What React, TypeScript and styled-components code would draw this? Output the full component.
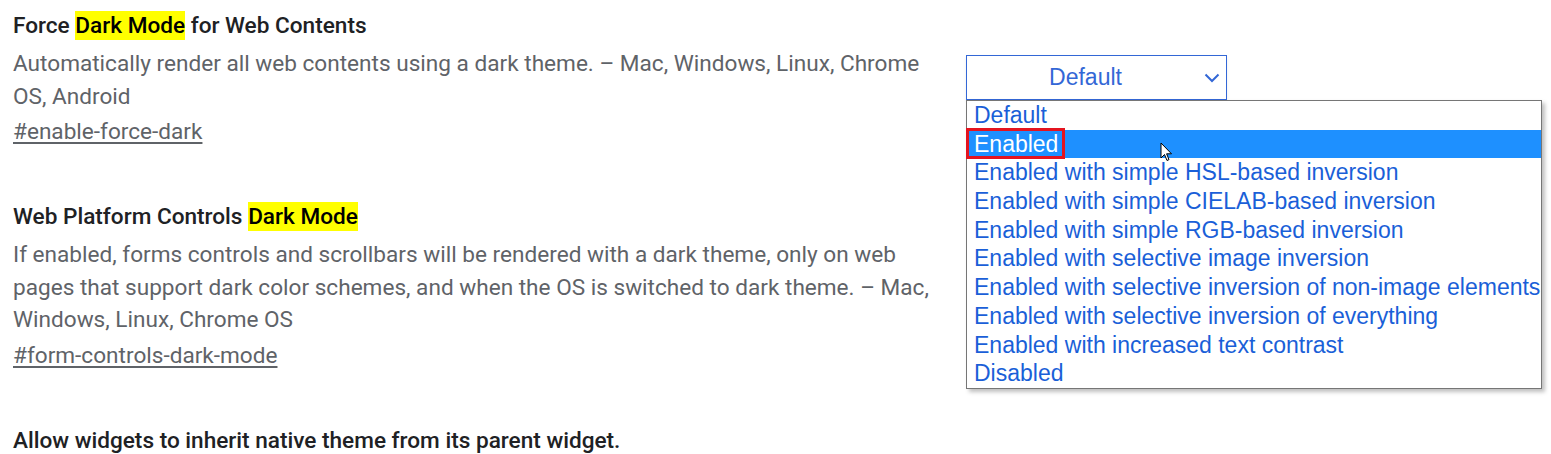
import React from "react";
import styled, { createGlobalStyle } from "styled-components";

const Global = createGlobalStyle`
  html, body { margin: 0; padding: 0; background: #ffffff; }
  body { font-family: Roboto, "Noto Sans", sans-serif; overflow: hidden; }
`;

const Page = styled.div`
  position: relative;
  width: 1551px;
  height: 454px;
  padding: 11px 0 0 13px;
  box-sizing: border-box;
  display: flex;
  flex-direction: column;
  gap: 54px;
`;

const Experiment = styled.section`
  display: flex;
  align-items: flex-start;
`;

const Info = styled.div`
  width: 935px;
  flex: none;
`;

const Title = styled.h3`
  margin: 0;
  font-family: Roboto, sans-serif;
  font-weight: 500;
  font-size: 22.6px;
  line-height: 30px;
  color: #202124;
`;

const Mark = styled.mark`
  background: #ffff00;
  color: #000;
  padding: 1px 0;
`;

const Desc = styled.p`
  margin: 7px 0 0;
  font-size: 22.6px;
  line-height: 32.6px;
  color: #5f6368;
`;

const Link = styled.a`
  display: block;
  margin-top: 3px;
  font-size: 22.6px;
  line-height: 32px;
  color: #5f6368;
  text-decoration: underline;
  text-underline-offset: 3px;
`;

const Control = styled.div`
  position: relative;
  margin: 44px 0 0 18px;
`;

const Select = styled.div`
  width: 261px;
  height: 45px;
  box-sizing: border-box;
  border: 1px solid #3367d6;
  padding-right: 22px;
  display: flex;
  align-items: center;
  justify-content: center;
  position: relative;
  font-family: "Liberation Sans", Arial, sans-serif;
  font-size: 23px;
  color: #3367d6;
  box-shadow: 0 2px 3px rgba(0, 0, 0, 0.08);
`;

const Chevron = styled.svg`
  position: absolute;
  right: 6px;
  top: 17px;
`;

const Popup = styled.ul`
  position: absolute;
  left: 0;
  top: 45px;
  width: 576px;
  margin: 0;
  padding: 0;
  list-style: none;
  box-sizing: border-box;
  border: 1px solid #767676;
  background: #fff;
  box-shadow: 3px 3px 4px rgba(0, 0, 0, 0.25);
  z-index: 2;
`;

const Option = styled.li<{ $selected?: boolean }>`
  position: relative;
  height: 28.7px;
  line-height: 28.7px;
  padding-left: 7px;
  font-family: "Liberation Sans", Arial, sans-serif;
  font-size: 23px;
  white-space: nowrap;
  color: ${(p) => (p.$selected ? "#ffffff" : "#1a5fd8")};
  background: ${(p) => (p.$selected ? "#1e90ff" : "transparent")};
`;

const RedBox = styled.span`
  position: absolute;
  left: -1px;
  top: -2px;
  width: 99px;
  height: 31px;
  box-sizing: border-box;
  border: 3px solid #e4141f;
`;

const Cursor = styled.svg`
  position: absolute;
  left: 193px;
  top: 12px;
`;

const options = [
  "Default",
  "Enabled",
  "Enabled with simple HSL-based inversion",
  "Enabled with simple CIELAB-based inversion",
  "Enabled with simple RGB-based inversion",
  "Enabled with selective image inversion",
  "Enabled with selective inversion of non-image elements",
  "Enabled with selective inversion of everything",
  "Enabled with increased text contrast",
  "Disabled",
];

export default function App() {
  return (
    <>
      <Global />
      <Page>
        <Experiment>
          <Info>
            <Title>
              Force <Mark>Dark Mode</Mark> for Web Contents
            </Title>
            <Desc>
              Automatically render all web contents using a dark theme. – Mac, Windows, Linux, Chrome OS, Android
            </Desc>
            <Link href="#enable-force-dark">#enable-force-dark</Link>
          </Info>
          <Control>
            <Select>
              Default
              <Chevron width="16" height="10" viewBox="0 0 16 10">
                <path d="M1.5 1.5 L8 8 L14.5 1.5" fill="none" stroke="#3367d6" strokeWidth="2" />
              </Chevron>
            </Select>
            <Popup>
              {options.map((o, i) => (
                <Option key={o} $selected={i === 1}>
                  {o}
                  {i === 1 && (
                    <>
                      <RedBox />
                      <Cursor width="14" height="21" viewBox="0 0 14 21">
                        <path
                          d="M1 1 L1 16 L4.5 12.5 L7 18.5 L9 17.6 L6.6 11.8 L11.5 11.8 Z"
                          fill="#fff"
                          stroke="#000"
                          strokeWidth="1"
                          strokeLinejoin="round"
                        />
                      </Cursor>
                    </>
                  )}
                </Option>
              ))}
            </Popup>
          </Control>
        </Experiment>
        <Experiment>
          <Info>
            <Title>
              Web Platform Controls <Mark>Dark Mode</Mark>
            </Title>
            <Desc>
              If enabled, forms controls and scrollbars will be rendered with a dark theme, only on web pages that support dark color schemes, and when the OS is switched to dark theme. – Mac, Windows, Linux, Chrome OS
            </Desc>
            <Link href="#form-controls-dark-mode">#form-controls-dark-mode</Link>
          </Info>
        </Experiment>
        <Experiment>
          <Info>
            <Title>Allow widgets to inherit native theme from its parent widget.</Title>
          </Info>
        </Experiment>
      </Page>
    </>
  );
}
